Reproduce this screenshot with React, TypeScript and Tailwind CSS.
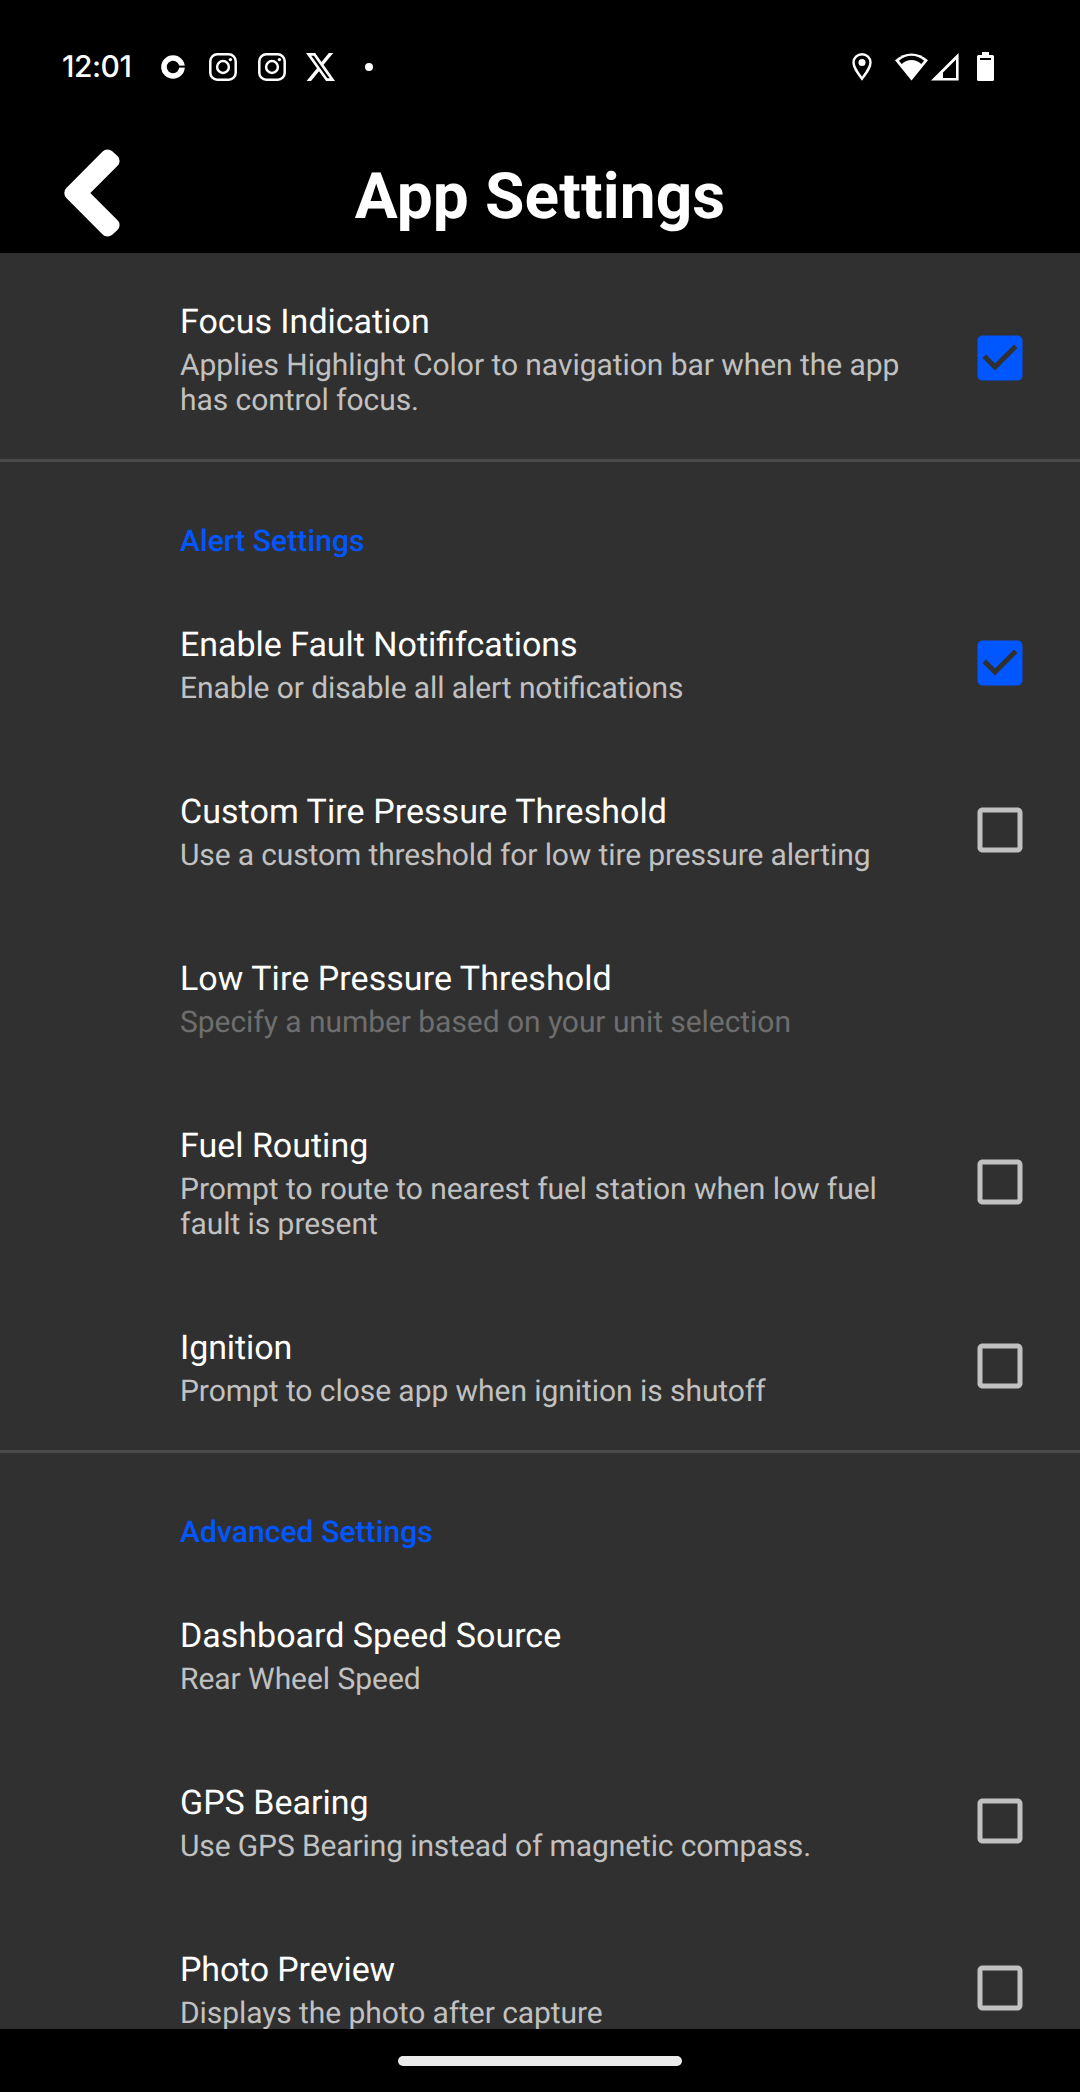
import React from "react";

type Item = {
  title: string;
  lines: string[];
  check?: boolean;
  dim?: boolean;
  titleTrack?: string;
  track?: string;
};

function Check({ on }: { on: boolean }) {
  return (
    <svg className="h-[60px] w-[60px]" viewBox="0 0 24 24" fill={on ? "#0057ff" : "#c1c1c1"}>
      {on ? (
        <path d="M19 3H5c-1.11 0-2 .9-2 2v14c0 1.1.89 2 2 2h14c1.11 0 2-.9 2-2V5c0-1.1-.89-2-2-2zm-9 14l-5-5 1.41-1.41L10 14.17l7.59-7.59L19 8l-9 9z" />
      ) : (
        <path d="M19 5v14H5V5h14m0-2H5c-1.1 0-2 .9-2 2v14c0 1.1.9 2 2 2h14c1.1 0 2-.9 2-2V5c0-1.1-.9-2-2-2z" />
      )}
    </svg>
  );
}

function Row({ item }: { item: Item }) {
  const tall = item.lines.length > 1;
  return (
    <div className={`flex shrink-0 items-center pr-[50px] pl-[180px] ${tall ? "h-[202px] pt-[2px]" : "h-[167px] pt-px"}`}>
      <div className={`flex-1 whitespace-nowrap ${tall ? "pt-px" : "pt-[2px]"}`}>
        <div className={`mb-[2px] text-[34px] leading-[47px] text-white ${item.titleTrack ?? ""}`}>{item.title}</div>
        {item.lines.map((line) => (
          <div
            key={line}
            className={`text-[30px] leading-[35px] ${item.track ?? ""} ${item.dim ? "text-[#6e6e6e]" : "text-[#c1c1c1]"}`}
          >
            {line}
          </div>
        ))}
      </div>
      {item.check !== undefined && <Check on={item.check} />}
    </div>
  );
}

function Section({ title, items }: { title: string; items: Item[] }) {
  return (
    <section className="mt-px shrink-0 border-t-[3px] border-[#4a4a4a]">
      <h2 className="mt-[62px] mb-[20px] pl-[180px] text-[30px] leading-[35px] font-medium tracking-[0.08px] text-[#0057ff]">
        {title}
      </h2>
      {items.map((i) => (
        <Row key={i.title} item={i} />
      ))}
    </section>
  );
}

function Instagram() {
  return (
    <svg className="h-7 w-7" viewBox="0 0 28 28" fill="none" stroke="#fff" strokeWidth="2.5">
      <rect x="1.3" y="1.3" width="25.4" height="25.4" rx="7" />
      <circle cx="14" cy="14" r="5.9" />
      <circle cx="21.4" cy="6.6" r="1.7" fill="#fff" stroke="none" />
    </svg>
  );
}

const focus: Item = {
  title: "Focus Indication",
  lines: ["Applies Highlight Color to navigation bar when the app", "has control focus."],
  check: true,
  track: "tracking-[-0.05px]",
};

const alerts: Item[] = [
  {
    title: "Enable Fault Notififcations",
    lines: ["Enable or disable all alert notifications"],
    check: true,
    titleTrack: "tracking-[-0.03px]",
    track: "tracking-[-0.1px]",
  },
  {
    title: "Custom Tire Pressure Threshold",
    lines: ["Use a custom threshold for low tire pressure alerting"],
    check: false,
    titleTrack: "tracking-[0.06px]",
    track: "tracking-[-0.13px]",
  },
  {
    title: "Low Tire Pressure Threshold",
    lines: ["Specify a number based on your unit selection"],
    dim: true,
    titleTrack: "tracking-[0.06px]",
    track: "tracking-[-0.05px]",
  },
  {
    title: "Fuel Routing",
    lines: ["Prompt to route to nearest fuel station when low fuel", "fault is present"],
    check: false,
    track: "tracking-[-0.05px]",
  },
  {
    title: "Ignition",
    lines: ["Prompt to close app when ignition is shutoff"],
    check: false,
    titleTrack: "tracking-[-0.1px]",
    track: "tracking-[-0.06px]",
  },
];

const advanced: Item[] = [
  { title: "Dashboard Speed Source", lines: ["Rear Wheel Speed"], track: "tracking-[-0.05px]" },
  { title: "GPS Bearing", lines: ["Use GPS Bearing instead of magnetic compass."], check: false, track: "tracking-[-0.12px]" },
  {
    title: "Photo Preview",
    lines: ["Displays the photo after capture"],
    check: false,
    titleTrack: "tracking-[-0.15px]",
    track: "tracking-[-0.08px]",
  },
];

function StatusBar() {
  return (
    <div className="flex h-[134px] items-center pr-[86px] pl-[62px]">
      <span className="w-[99px] font-['Inter',sans-serif] text-[30px] leading-none font-medium tracking-[-0.5px] whitespace-nowrap">
        12:01
      </span>
      <svg className="h-6 w-6" viewBox="0 0 24 24">
        <circle cx="12" cy="12" r="9" fill="none" stroke="#fff" strokeWidth="5.6" />
        <rect x="16" y="10.6" width="8" height="2" fill="#000" />
      </svg>
      <div className="ml-6 flex gap-[21px]">
        <Instagram />
        <Instagram />
      </div>
      <svg
        className="ml-5 h-[28px] w-[29px]"
        viewBox="1.254 2.25 21.573 19.5"
        preserveAspectRatio="none"
        fill="#fff"
      >
        <path d="M18.244 2.25h3.308l-7.227 8.26 8.502 11.24H16.17l-5.214-6.817L4.99 21.75H1.68l7.73-8.835L1.254 2.25H8.08l4.713 6.231zm-1.161 17.52h1.833L7.084 4.126H5.117z" />
      </svg>
      <span className="ml-[30px] h-2 w-2 rounded-full bg-white" />
      <svg className="ml-auto h-[30px] w-[20px]" viewBox="0 0 20 30">
        <path
          d="M10 2.2C5.3 2.2 1.5 5.9 1.5 10.5c0 5 3.6 9.6 8.5 16.2 4.9-6.6 8.5-11.2 8.5-16.2 0-4.6-3.8-8.3-8.5-8.3z"
          fill="none"
          stroke="#fff"
          strokeWidth="2.4"
        />
        <circle cx="10" cy="10.6" r="3.5" fill="#fff" />
      </svg>
      <svg className="ml-[23px] h-[30px] w-[33px]" viewBox="0 0 33 30">
        <path d="M0 8.3C9.5-.9 23.5-.9 33 8.3L16.5 28.5z" fill="#fff" />
        <path d="M3.9 8.7C11.5 2.2 21.5 2.2 29.1 8.7L26.3 12C20.500 6.8 12.500 6.8 6.7 12z" fill="#000" />
      </svg>
      <svg className="ml-[3px] h-[30px] w-[28px]" viewBox="0 0 28 30">
        <path d="M27.6 1v27.5H0z M25 7.5L12 20.5v5.500h13z" fill="#fff" fillRule="evenodd" />
      </svg>
      <svg className="ml-[18px] h-[30px] w-[17px]" viewBox="0 0 17 30">
        <path d="M5 0h7v3h3.5Q17 3 17 4.5v23Q17 29 15.5 29h-14Q0 29 0 27.5v-23Q0 3 1.5 3H5z" fill="#fff" />
        <rect x="3" y="6" width="11" height="2" fill="#000" />
      </svg>
    </div>
  );
}

export default function App() {
  return (
    <div className="flex h-[2092px] w-[1080px] flex-col overflow-hidden bg-black font-['Roboto',sans-serif] text-white [font-feature-settings:'liga'_1] [text-rendering:geometricPrecision]">
      <StatusBar />
      <header className="grid h-[119px] grid-cols-[180px_1fr_180px] items-center">
        <svg className="mb-[2px] ml-[60px] h-[100px] w-[70px]" viewBox="60 142.5 70 100">
          <path
            d="M107.6 156L71.3 192.5L107.6 229L112.6 224.6L80.4 192.5L112.6 160.4z"
            fill="#fff"
            stroke="#fff"
            strokeWidth="14"
            strokeLinejoin="round"
          />
        </svg>
        <h1 className="pt-[5px] text-center text-[64px] leading-[75px] font-bold tracking-[0.1px] whitespace-nowrap">App Settings</h1>
      </header>
      <main className="flex h-[1776px] shrink-0 flex-col overflow-hidden bg-[#303030] pt-[3px]">
        <Row item={focus} />
        <Section title="Alert Settings" items={alerts} />
        <Section title="Advanced Settings" items={advanced} />
      </main>
      <div className="flex justify-center pt-[27px]">
        <div className="h-[10px] w-[284px] rounded-full bg-[#ebebeb]" />
      </div>
    </div>
  );
}
